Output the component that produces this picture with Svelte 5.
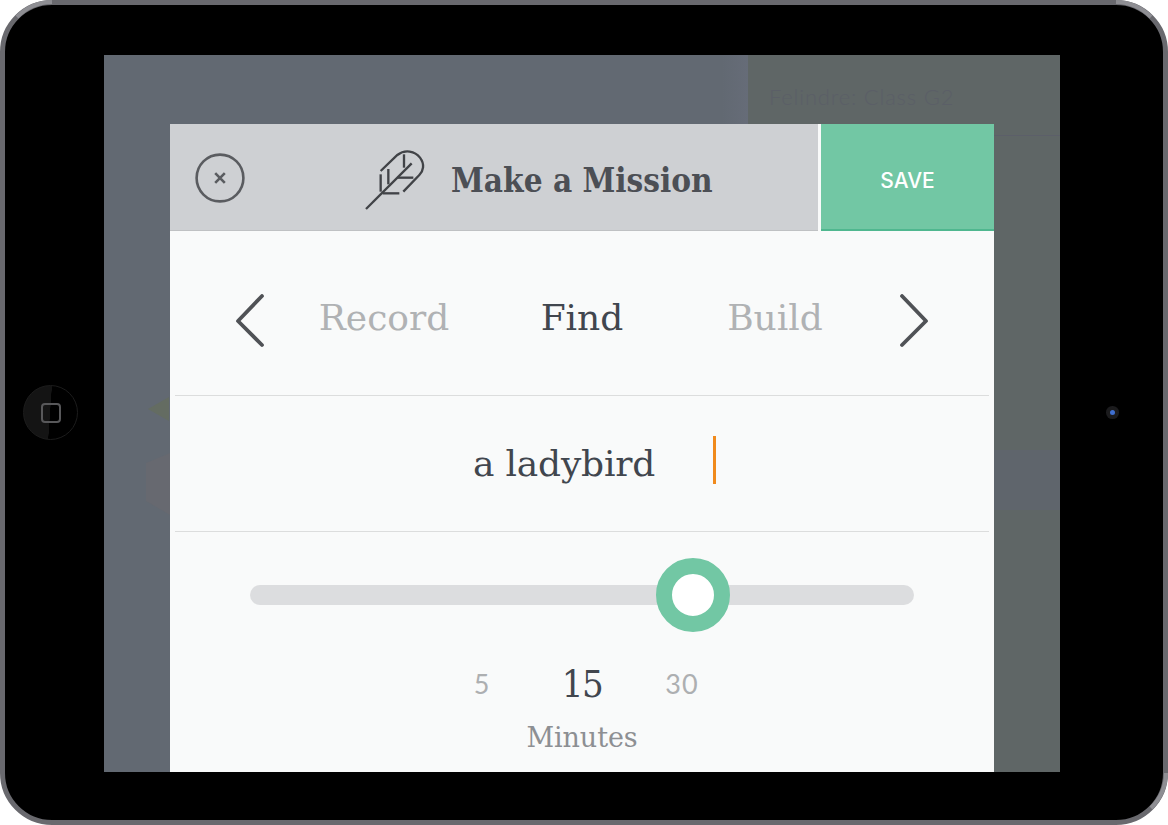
<script lang="ts">
	const tabs = [
		{ label: 'Record', active: false },
		{ label: 'Find', active: true },
		{ label: 'Build', active: false }
	];
	const stops = [
		{ label: '5', active: false },
		{ label: '15', active: true },
		{ label: '30', active: false }
	];
	let mission = $state('a ladybird');
	let sliderPos = 66.7;
</script>

<div class="device">
	<svg class="glare" width="1168" height="825" viewBox="0 0 1168 825" fill="none" stroke="#8e8e93" stroke-width="4">
		<path d="M52 2A50 50 0 0 0 17 17" />
		<path d="M1116 2A50 50 0 0 1 1151 17" />
		<path d="M1166 773A50 50 0 0 1 1151 808" />
	</svg>

	<div class="bezel bezel-left">
		<div class="home"><span class="home-square"></span></div>
	</div>

	<div class="screen">
		<!-- dimmed page behind the modal -->
		<div class="backdrop">
			<div class="backdrop-left"></div>
			<div class="backdrop-right">
				<div class="backdrop-title">Felindre: Class G2</div>
				<div class="backdrop-band"></div>
			</div>
			<div class="backdrop-arrow"></div>
			<div class="backdrop-block"></div>
		</div>

		<div class="modal">
			<header class="modal-header">
				<div class="header-main">
					<button type="button" class="close" aria-label="Close">
						<svg width="50" height="50" viewBox="0 0 50 50" fill="none" stroke="#5a5c60">
							<circle cx="25" cy="25" r="23.4" stroke-width="2.6" />
							<path d="M20.2 20.2l9.6 9.6M29.8 20.2l-9.6 9.6" stroke-width="2.6" />
						</svg>
					</button>
					<svg class="feather" width="70" height="70" viewBox="0 0 210 210" fill="none" stroke="#414347" stroke-width="7">
						<path d="M18 192L155 55" />
						<path d="M62 78L112 30C135 12 165 18 180 38C195 58 190 78 178 90L130 140" />
						<path d="M62 88V140" />
						<path d="M68 145H118" />
						<path d="M85 72V118" />
						<path d="M132 28V68" />
						<path d="M112 98H160" />
					</svg>
					<h1>Make a Mission</h1>
				</div>
				<button type="button" class="save">SAVE</button>
			</header>

			<nav class="tabs">
				<svg class="chev" width="30" height="54" viewBox="0 0 30 54" fill="none" stroke="#505256" stroke-width="3.8" stroke-linecap="round" stroke-linejoin="round">
					<path d="M27 2L3 27L27 51" />
				</svg>
				<div class="tab-labels">
					{#each tabs as tab}
						<span class="tab" class:active={tab.active}>{tab.label}</span>
					{/each}
				</div>
				<svg class="chev" width="30" height="54" viewBox="0 0 30 54" fill="none" stroke="#505256" stroke-width="3.8" stroke-linecap="round" stroke-linejoin="round">
					<path d="M3 2L27 27L3 51" />
				</svg>
			</nav>

			<div class="mission">
				<span class="mission-text">{mission}</span>
				<span class="caret"></span>
			</div>

			<div class="duration">
				<div class="track">
					<span class="thumb" style="left: {sliderPos}%"></span>
				</div>
				<div class="stops">
					{#each stops as stop}
						<span class="stop" class:active={stop.active}>{stop.label}</span>
					{/each}
				</div>
				<div class="unit">Minutes</div>
			</div>
		</div>
	</div>

	<div class="bezel bezel-right">
		<span class="camera"></span>
	</div>
</div>

<style>
	:global(body) {
		background: #fff;
		overflow: hidden;
	}

	.device {
		position: relative;
		box-sizing: border-box;
		width: 1168px;
		height: 825px;
		display: flex;
		align-items: flex-start;
		background: #000;
		border: 5px solid #69696e;
		border-radius: 52px;
		padding-top: 50px;
		font-family: 'DejaVu Serif', 'Liberation Serif', serif;
	}

	.glare {
		position: absolute;
		left: -5px;
		top: -5px;
		pointer-events: none;
	}

	.bezel {
		height: 715px;
		display: flex;
		align-items: center;
	}

	.bezel-left {
		width: 99px;
		padding-left: 18px;
		box-sizing: border-box;
	}

	.bezel-right {
		flex: 1;
		padding-left: 50px;
	}

	.home {
		width: 55px;
		height: 55px;
		border-radius: 50%;
		box-sizing: border-box;
		border: 1px solid #1c1c1c;
		background: linear-gradient(94deg, #141414 0 49%, #000 49.5%);
		display: flex;
		align-items: center;
		justify-content: center;
	}

	.home-square {
		width: 20px;
		height: 20px;
		box-sizing: border-box;
		border: 2px solid #58585a;
		border-radius: 4px;
	}

	.camera {
		width: 5px;
		height: 5px;
		border-radius: 50%;
		background: #3f6fd0;
		box-shadow: 0 0 0 4px #1b1b1d;
	}

	.screen {
		position: relative;
		width: 956px;
		height: 717px;
		overflow: hidden;
		background: #626972;
		padding: 69px 66px 0;
		box-sizing: border-box;
	}

	.backdrop {
		position: absolute;
		inset: 0;
		display: flex;
		box-shadow: inset 0 0 0 1px rgba(255, 255, 255, 0.1);
	}

	.backdrop-left {
		width: 644px;
		background: linear-gradient(90deg, #626972 0 96%, #666c78);
	}

	.backdrop-right {
		flex: 1;
		background: #5f6666;
		display: flex;
		flex-direction: column;
	}

	.backdrop-title {
		height: 81px;
		box-sizing: border-box;
		padding: 28px 0 0 21px;
		border-bottom: 1px solid #5c5f69;
		font-family: 'Lato', 'Liberation Sans', sans-serif;
		font-size: 22px;
		font-weight: 300;
		letter-spacing: 0.8px;
		color: #5b5f67;
	}

	.backdrop-band {
		height: 60px;
		margin-top: 314px;
		background: #5f656c;
	}

	.backdrop-arrow {
		position: absolute;
		left: 44px;
		top: 342px;
		border: 12px solid transparent;
		border-right: 21px solid #646c62;
		border-left: 0;
	}

	.backdrop-block {
		position: absolute;
		left: 42px;
		top: 398px;
		width: 24px;
		height: 62px;
		background: #676970;
		clip-path: polygon(0 10px, 100% 0, 100% 100%, 0 48px);
	}

	.modal {
		position: relative;
		height: 648px;
		background: #f9fafa;
	}

	.modal-header {
		display: flex;
		height: 107px;
	}

	.header-main {
		width: 648px;
		height: 106px;
		border-bottom: 1px solid #bfc1c3;
		background: #ced0d3;
		display: flex;
		align-items: center;
	}

	.close {
		flex: none;
		width: 50px;
		height: 50px;
		padding: 0;
		margin-left: 25px;
		margin-top: 2px;
		border: 0;
		background: none;
		line-height: 0;
	}

	.feather {
		flex: none;
		margin-left: 115px;
		margin-top: 6px;
	}

	h1 {
		margin: 7px 0 0 21px;
		font-family: 'DejaVu Serif Condensed', 'DejaVu Serif', serif;
		font-size: 33px;
		font-weight: 700;
		line-height: 1;
		white-space: nowrap;
		color: #4c4f55;
	}

	.save {
		flex: none;
		width: 173px;
		margin-left: 3px;
		padding: 8px 0 0;
		border: 0;
		border-bottom: 2px solid #4fb78f;
		background: #72c7a4;
		color: #fff;
		font-family: 'Inter', 'Liberation Sans', sans-serif;
		font-size: 21px;
		font-weight: 500;
	}

	.tabs {
		height: 165px;
		margin: 0 5px;
		box-sizing: border-box;
		border-bottom: 1px solid #dcdddd;
		display: flex;
		align-items: center;
		padding: 16px 60px 0;
	}

	.chev {
		flex: none;
	}

	.tab-labels {
		flex: 1;
		display: grid;
		grid-template-columns: repeat(3, 195px);
		justify-content: center;
		justify-items: center;
		margin-top: -6px;
	}

	.tab {
		font-size: 36px;
		line-height: 1.2;
		color: #b0b2b4;
	}

	.tab:first-child {
		margin-right: 6px;
	}

	.tab:last-child {
		margin-right: 4px;
	}

	.tab.active {
		color: #41464e;
	}

	.mission {
		height: 136px;
		margin: 0 5px;
		box-sizing: border-box;
		border-bottom: 1px solid #dcdddd;
		display: flex;
		align-items: center;
		padding: 0 0 0 298px;
	}

	.mission-text {
		width: 240px;
		font-size: 36px;
		letter-spacing: -0.2px;
		color: #41464e;
		white-space: nowrap;
	}

	.caret {
		width: 3px;
		height: 48px;
		background: #f08a1c;
		margin-bottom: 8px;
	}

	.duration {
		padding: 53px 80px 0 80px;
		text-align: center;
	}

	.track {
		position: relative;
		height: 20px;
		border-radius: 10px;
		background: #dcdddf;
	}

	.thumb {
		position: absolute;
		top: 10px;
		width: 74px;
		height: 74px;
		box-sizing: border-box;
		border: 16px solid #72c7a4;
		border-radius: 50%;
		background: #fff;
		transform: translate(-50%, -50%);
	}

	.stops {
		display: grid;
		grid-template-columns: repeat(3, 100px);
		justify-content: center;
		justify-items: center;
		align-items: center;
		margin-top: 60px;
	}

	.stop {
		font-family: 'Lato', 'Liberation Sans', sans-serif;
		font-size: 27px;
		line-height: 38px;
		letter-spacing: 1px;
		color: #adafb1;
	}

	.stop.active {
		font-family: 'DejaVu Serif Condensed', 'DejaVu Serif', serif;
		font-size: 38px;
		letter-spacing: -1.5px;
		color: #41464e;
	}

	.unit {
		margin-top: 19px;
		font-size: 27px;
		letter-spacing: -0.1px;
		color: #8d8f93;
		line-height: 32px;
	}
</style>
